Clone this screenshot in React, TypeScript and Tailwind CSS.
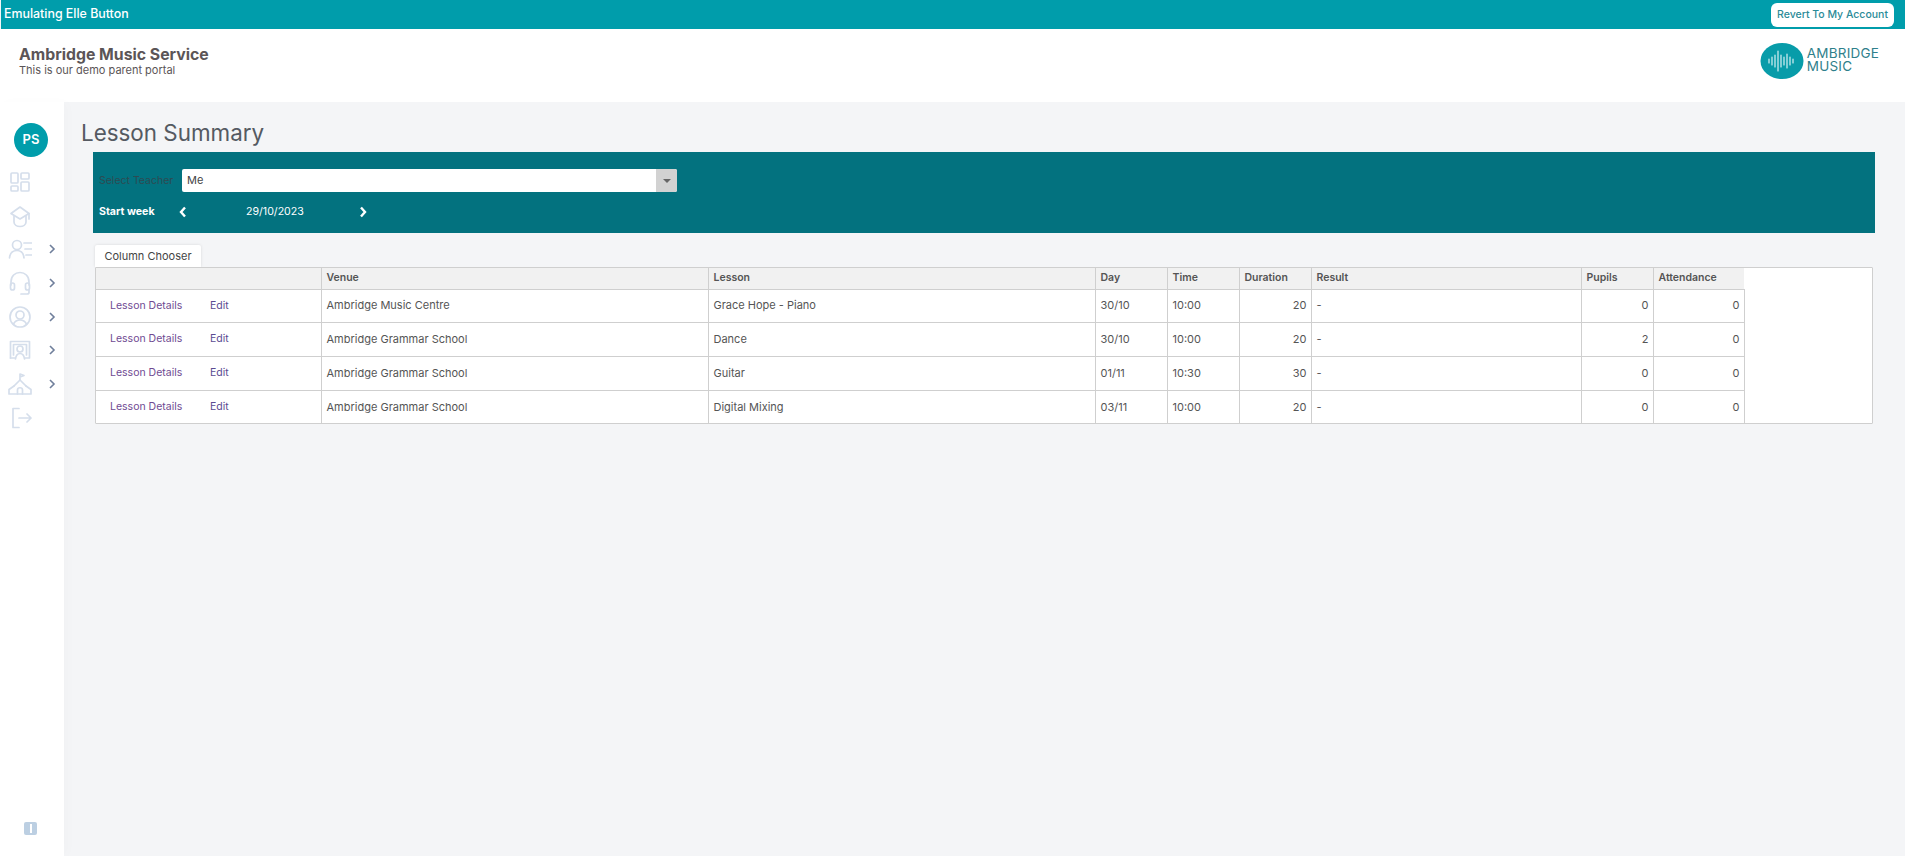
import React from "react";

const font = { fontFamily: "Inter, 'Open Sans', sans-serif" };

const rows = [
  ["Ambridge Music Centre", "Grace Hope - Piano", "30/10", "10:00", "20", "-", "0", "0"],
  ["Ambridge Grammar School", "Dance", "30/10", "10:00", "20", "-", "2", "0"],
  ["Ambridge Grammar School", "Guitar", "01/11", "10:30", "30", "-", "0", "0"],
  ["Ambridge Grammar School", "Digital Mixing", "03/11", "10:00", "20", "-", "0", "0"],
];

function Ic({ children, w = 24 }: { children: React.ReactNode; w?: number }) {
  return (
    <svg width={w} height={24} viewBox={`0 0 ${w} 24`} fill="none" stroke="#d5deeb" strokeWidth={1.7} strokeLinecap="round" strokeLinejoin="round">
      {children}
    </svg>
  );
}

const icons: [React.ReactNode, boolean][] = [
  [<Ic key="a"><rect x="3" y="3" width="7" height="10" rx="1" /><rect x="13" y="3" width="8" height="6" rx="1" /><rect x="3" y="16" width="7" height="5" rx="1" /><rect x="13" y="12" width="8" height="9" rx="1" /></Ic>, false],
  [<Ic key="b"><path d="M12 3 L3 9.5 L12 15 L21 9.5 Z" /><path d="M6 12 V18 C6 21 9 22.5 12 22.5 C15 22.5 18 21 18 18 V12" /><path d="M21 9.5 V15" /></Ic>, false],
  [<Ic key="c"><circle cx="9" cy="8" r="4.5" /><path d="M1.5 21 C2 16 5 13.5 9 13.5 C13 13.5 15.5 16 16 21" /><path d="M16 6 H24 M17 12 H24 M18 18 H24" /></Ic>, true],
  [<Ic key="d"><path d="M3 14 V11 C3 5 7 1.5 12 1.5 C17 1.5 21 5 21 11 V14" /><rect x="2.5" y="12" width="4" height="7" rx="2" /><rect x="17.5" y="12" width="4" height="7" rx="2" /><path d="M21 19 V21.5 C21 22.5 20 23 19 23 H13" /></Ic>, true],
  [<Ic key="e"><circle cx="12" cy="12" r="10" /><circle cx="12" cy="10" r="4" /><path d="M5.5 19 C7 16 9.5 15 12 15 C14.5 15 17 16 18.5 19" /></Ic>, true],
  [<Ic key="f"><path d="M2.5 20 V3.5 H21.5 V20 H17" /><path d="M7 20 H2.5" /><path d="M5.5 17 V6.5 H18.5 V17" /><circle cx="12" cy="11" r="3" /><path d="M7.5 21 C8 17 10 15.5 12 15.5 C14 15.5 16 17 16.5 21" /></Ic>, true],
  [<Ic key="g" w={26}><path d="M13 8 V2 L17 3.5 L13 5" /><path d="M7 14 L13 8 L19 14" /><path d="M7 14 L2 17.5 V22 H24 V17.5 L19 14" /><path d="M10.5 22 V18 C10.5 15 15.5 15 15.5 18 V22" /></Ic>, true],
  [<Ic key="h"><path d="M11 2.5 H5 V21.5 H11" /><path d="M11 12 H23 M19 8 L23 12 L19 16" /></Ic>, false],
];

export default function App() {
  return (
    <div className="flex h-[856px] flex-col overflow-hidden bg-[#f4f5f7] text-[#555]" style={font}>
      <div className="ml-px flex h-[29px] shrink-0 items-center justify-between bg-[#009dab] pl-[3px] pr-[11px]">
        <span className="text-[12.4px] font-medium text-white">Emulating Elle Button</span>
        <button className="h-[24px] w-[123px] rounded-[6px] bg-white text-[10.5px] font-medium text-[#2b8b98]">Revert To My Account</button>
      </div>

      <header className="flex h-[73px] shrink-0 items-start justify-between bg-white pl-[19px] pr-[25px]">
        <div className="pt-[16px]">
          <div className="text-[15.8px] font-bold leading-[20px] text-[#5b5557]">Ambridge Music Service</div>
          <div className="text-[11px] leading-[11px] text-[#5b5557]">This is our demo parent portal</div>
        </div>
        <div className="mr-px flex items-center gap-[3px] pt-[14px]">
          <svg width="44" height="36" viewBox="0 0 44 36">
            <ellipse cx="22" cy="18" rx="21.5" ry="18" fill="#089ca9" />
            <path d="M9 16v4M12 14v8M15 12v12M18 8v20M21 12v12M24 14v8M27 11v14M30 14v8M33 16v4" stroke="#d8f1f3" strokeWidth="1.2" strokeLinecap="round" />
          </svg>
          <div className="-mt-[2px] text-[13.5px] leading-[13px] tracking-[0.2px] text-[#2f7f8b]">
            <div>AMBRIDGE</div>
            <div>MUSIC</div>
          </div>
        </div>
      </header>

      <div className="flex min-h-0 flex-1">
        <aside className="flex w-16 shrink-0 flex-col bg-white shadow-[4px_0_10px_rgba(0,0,0,0.015)]">
          <div className="ml-[14px] mt-[21px] flex h-[34px] w-[34px] items-center justify-center rounded-full bg-[#009dab] text-[13px] font-semibold text-white">PS</div>
          <nav className="mt-[8px] flex flex-col">
            {icons.map(([icon, chevron], i) => (
              <div key={i} className="flex h-[33.7px] items-center pl-[7px]">
                <div className="flex w-[26px] justify-center">{icon}</div>
                {chevron && (
                  <svg className="ml-[15px]" width="8" height="10" viewBox="0 0 8 10" fill="none" stroke="#6f7f9b" strokeWidth="1.6">
                    <path d="M2 1 L6 5 L2 9" />
                  </svg>
                )}
              </div>
            ))}
          </nav>
          <div className="mb-[21px] ml-[24px] mt-auto flex h-[13px] w-[13px] items-center justify-center rounded-[2px] bg-[#bccfe2]">
            <div className="h-[9px] w-[2px] bg-white" />
          </div>
        </aside>

        <main className="min-w-0 flex-1 pl-[17px] pr-[30px]">
          <h1 className="pt-[16px] text-[22.4px] font-normal leading-[30px] text-[#555a62]">Lesson Summary</h1>
          <section className="ml-[12px] mt-[4px] h-[81px] bg-[#03727f] pl-[6px] pt-[17px]">
            <div className="flex h-[23px] items-center">
              <span className="w-[83px] whitespace-nowrap text-[10.5px] text-[#2e4a52]">Select Teacher</span>
              <div className="flex h-[23px] w-[495px] items-stretch overflow-hidden rounded-[2px] bg-white">
                <span className="flex-1 pl-[5px] text-[11px] leading-[22px] text-[#444]">Me</span>
                <span className="flex w-[21px] items-center justify-center bg-[#d2d2d2]">
                  <span className="h-0 w-0 border-x-[4px] border-t-[4px] border-x-transparent border-t-[#666]" />
                </span>
              </div>
            </div>
            <div className="mt-[10px] flex h-[20px] items-center text-white">
              <span className="w-[79px] whitespace-nowrap text-[10.6px] font-bold">Start week</span>
              <svg width="10" height="12" viewBox="0 0 10 12" fill="none" stroke="white" strokeWidth="2.4"><path d="M7 1.5 L3 6 L7 10.5" /></svg>
              <span className="ml-[58px] w-[90px] text-[10.6px]">29/10/2023</span>
              <svg className="ml-[22px]" width="10" height="12" viewBox="0 0 10 12" fill="none" stroke="white" strokeWidth="2.4"><path d="M3 1.5 L7 6 L3 10.5" /></svg>
            </div>
          </section>

          <button className="ml-[14px] mt-[12px] block h-[22px] w-[106px] whitespace-nowrap rounded-t-[2px] bg-white text-[11px] text-[#444] shadow-[0_0_3px_rgba(0,0,0,0.12)]">Column Chooser</button>

          <div className="ml-[14px] w-[1778px] overflow-hidden rounded-[1px] border border-[#cfcfcf] bg-white">
            <table className="table-fixed border-collapse text-[11px]" style={{ width: 1648 }}>
              <colgroup>
                <col style={{ width: 225 }} />
                <col style={{ width: 387 }} />
                <col style={{ width: 387 }} />
                <col style={{ width: 72 }} />
                <col style={{ width: 72 }} />
                <col style={{ width: 72 }} />
                <col style={{ width: 270 }} />
                <col style={{ width: 72 }} />
                <col style={{ width: 91 }} />
              </colgroup>
              <thead>
                <tr className="h-[21px] bg-[#f1f1f1] text-left text-[10.5px] font-semibold text-[#555]">
                  {["", "Venue", "Lesson", "Day", "Time", "Duration", "Result", "Pupils", "Attendance"].map((h, i) => (
                    <th key={i} className={`border-b border-[#cfcfcf] px-[5px] font-semibold ${i < 8 ? "border-r" : ""}`}>{h}</th>
                  ))}
                </tr>
              </thead>
              <tbody>
                {rows.map((r, i) => (
                  <tr key={i} className={i === 0 || i === 3 ? "h-[33px]" : "h-[34px]"}>
                    <td className={`border-r border-[#cfcfcf] ${i < 3 ? "border-b" : ""}`}>
                      <div className="flex pl-[14px] text-[10.5px]">
                        <span className="w-[100px] text-[#6f4a92]">Lesson Details</span>
                        <span className="text-[#5b4a92]">Edit</span>
                      </div>
                    </td>
                    {r.map((c, j) => (
                      <td key={j} className={`border-[#cfcfcf] px-[4px] pl-[5px] text-[#555] ${i < 3 ? "border-b" : ""} ${j < 8 ? "border-r" : ""} ${j === 4 || j >= 6 ? "text-right" : ""}`}>{c}</td>
                    ))}
                  </tr>
                ))}
              </tbody>
            </table>
          </div>
        </main>
      </div>
    </div>
  );
}
